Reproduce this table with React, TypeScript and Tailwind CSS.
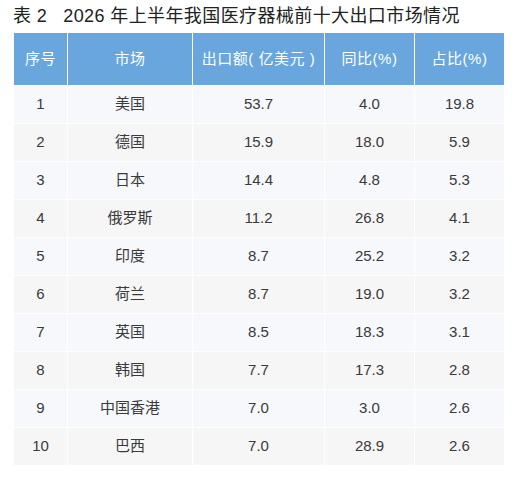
import React from "react";

const rows = [
  ["1", "美国", "53.7", "4.0", "19.8"],
  ["2", "德国", "15.9", "18.0", "5.9"],
  ["3", "日本", "14.4", "4.8", "5.3"],
  ["4", "俄罗斯", "11.2", "26.8", "4.1"],
  ["5", "印度", "8.7", "25.2", "3.2"],
  ["6", "荷兰", "8.7", "19.0", "3.2"],
  ["7", "英国", "8.5", "18.3", "3.1"],
  ["8", "韩国", "7.7", "17.3", "2.8"],
  ["9", "中国香港", "7.0", "3.0", "2.6"],
  ["10", "巴西", "7.0", "28.9", "2.6"],
];

const headers = ["序号", "市场", "出口额( 亿美元 )", "同比(%)", "占比(%)"];

export default function App() {
  return (
    <div
      className="w-[530px] h-[484px] bg-white"
      style={{ fontFamily: '"Liberation Sans", "Noto Sans CJK SC", sans-serif' }}
    >
      <div className="pl-[13px] pt-[4px] h-[33px] text-[18px] leading-[24px] text-[#222] tracking-[0.4px]">
        表 2<span className="inline-block w-[16px]"></span>2026 年上半年我国医疗器械前十大出口市场情况
      </div>
      <div className="ml-[14px] w-[490px] grid grid-cols-[53px_124px_131px_89px_89px] gap-px bg-white">
        {headers.map((h) => (
          <div
            key={h}
            className="h-[52px] bg-[#68a6dd] text-white text-[15px] tracking-[0.5px] flex items-center justify-center whitespace-pre"
          >
            {h}
          </div>
        ))}
        {rows.map((r, i) =>
          r.map((c, j) => (
            <div
              key={i + "-" + j}
              className={
                "h-[37px] text-[15px] text-[#3a3a3a] flex items-center justify-center " +
                (i % 2 === 0 ? "bg-[#f6f8fc]" : "bg-[#f6f6f7]")
              }
            >
              {c}
            </div>
          ))
        )}
      </div>
    </div>
  );
}
